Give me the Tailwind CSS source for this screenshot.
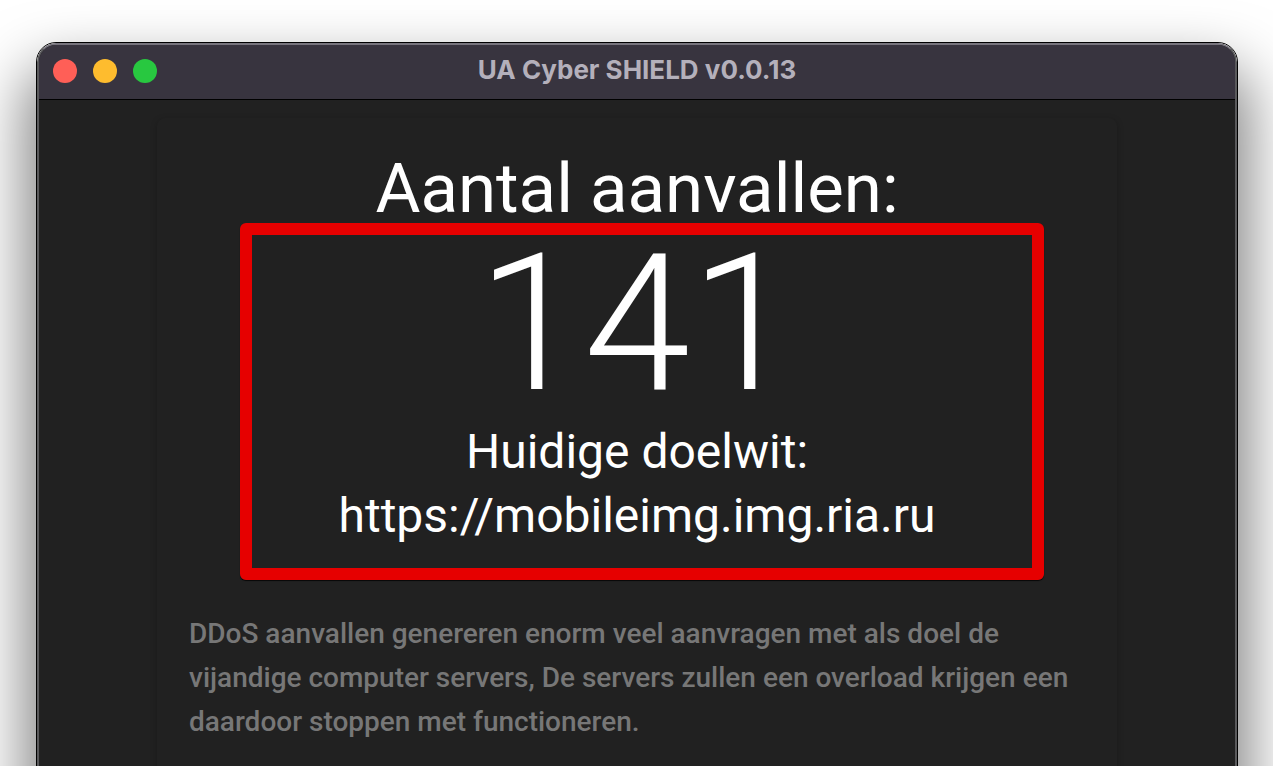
<!DOCTYPE html>
<html lang="nl">
<head>
    <meta charset="UTF-8">
    <meta name="viewport" content="width=device-width, initial-scale=1.0">
    <title>UA Cyber SHIELD v0.0.13</title>
    <script src="https://cdn.jsdelivr.net/npm/@tailwindcss/browser@4"></script>
</head>
<body class="bg-white h-screen overflow-hidden font-['Roboto',sans-serif]">
    <div class="h-full pt-[42px] pl-9 pr-[35px]">
        <!-- Window -->
        <div class="min-h-[120vh] rounded-[20px] border border-black shadow-[0_36px_60px_10px_rgba(0,0,0,0.5)] overflow-hidden flex">
            <div class="grow flex flex-col rounded-[19px] overflow-hidden bg-[#212121] border-2 border-[#5a5a5c] border-t-[#77747d]">
                <!-- Title bar -->
                <header class="grid grid-cols-3 items-center h-[55px] px-[14px] pb-[2px] bg-[#38343f] border-b border-black">
                    <div class="flex gap-4">
                        <button aria-label="Sluiten" class="size-6 rounded-full bg-[#ff5f57]"></button>
                        <button aria-label="Minimaliseren" class="size-6 rounded-full bg-[#febc2e]"></button>
                        <button aria-label="Maximaliseren" class="size-6 rounded-full bg-[#28c840]"></button>
                    </div>
                    <h1 class="pb-[2px] text-center text-[26px] leading-none font-bold text-[#b4b0bb] whitespace-nowrap font-['Inter',sans-serif]">UA Cyber SHIELD v0.0.13</h1>
                </header>

                <!-- Card -->
                <main class="grow mx-auto mt-[18px] w-full max-w-[960px] rounded-lg bg-[#212121] shadow-[0_2px_6px_rgba(0,0,0,0.25)] px-8 pt-9 text-center text-white">
                    <h2 class="text-[69px] leading-[69px]">Aantal aanvallen:</h2>
                    <!-- Highlighted result -->
                    <section class="ml-[51px] mr-[41px] pt-[3px] pr-[10px] pb-5 border-12 border-[#e60000] rounded-md shadow-[0_1px_1px_rgba(0,0,0,0.8)]">
                        <p class="text-[192px] leading-[172px] font-light">141</p>
                        <p class="mt-[10px] text-[48px] leading-[64px]">Huidige doelwit:<br>https://mobileimg.img.ria.ru</p>
                    </section>
                    <p class="mt-8 text-left text-[28px] leading-[44px] font-medium text-[#777777]">DDoS aanvallen genereren enorm veel aanvragen met als doel de vijandige computer servers, De servers zullen een overload krijgen een daardoor stoppen met functioneren.</p>
                </main>
            </div>
        </div>
    </div>
</body>
</html>
